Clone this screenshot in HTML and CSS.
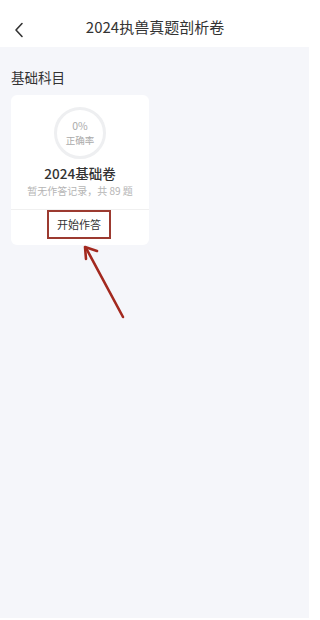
FILE: index.html
```html
<!DOCTYPE html>
<html lang="zh-CN">
<head>
  <meta charset="UTF-8" />
  <meta name="viewport" content="width=device-width, initial-scale=1.0" />
  <title>2024执兽真题剖析卷</title>
  <link rel="stylesheet" href="styles.css">
</head>
<body>
  <!-- Top bar -->
  <div class="topbar">
    <svg class="back" width="12" height="16" viewBox="0 0 12 16">
      <path d="M9 1.5 L3 8 L9 14.5" fill="none" stroke="#333" stroke-width="1.6" stroke-linecap="round" stroke-linejoin="round"/>
    </svg>
    <div class="title">2024执兽真题剖析卷</div>
  </div>

  <!-- Content -->
  <div class="main">
    <h2 class="section-title">基础科目</h2>
    <div class="grid">
      <div class="card">
        <div class="ring">
          <span class="rate">0%</span>
          <span class="rate-label">正确率</span>
        </div>
        <h3>2024基础卷</h3>
        <p class="meta">暂无作答记录，共 89 题</p>
        <div class="card-foot">
          <span class="start-btn">开始作答</span>
        </div>
      </div>
    </div>

    <!-- annotation arrow -->
    <svg class="arrow" width="60" height="90" viewBox="0 0 60 90">
      <path d="M51 78 L14 9" fill="none" stroke="#a3291f" stroke-width="2.6" stroke-linecap="round"/>
      <path d="M25 12 L13 8 L14 20" fill="none" stroke="#a3291f" stroke-width="2.6" stroke-linecap="round" stroke-linejoin="round"/>
    </svg>
  </div>
</body>
</html>
```

FILE: styles.css
```css
body {
  font-family: "Noto Sans CJK SC", "Noto Sans", sans-serif;
  background: #fff;
  margin: 0;
  padding: 0;
  color: #333;
}

.topbar {
  height: 47px;
  display: flex;
  align-items: center;
  justify-content: center;
  position: relative;
  padding-top: 5px;
  box-sizing: border-box;
}

.back {
  position: absolute;
  left: 13px;
  top: 22px;
}

.title {
  font-size: 15px;
  color: #333;
  margin-right: 10px;
}

.main {
  position: relative;
  width: 309px;
  height: 571px;
  background: #f5f6fa;
  padding: 20px 11px 0;
  box-sizing: border-box;
}

.section-title {
  font-size: 13.5px;
  font-weight: normal;
  margin: 0 0 8px;
  color: #333;
  line-height: 20px;
}

.grid {
  display: grid;
  grid-template-columns: 138px;
}

.card {
  background: #fff;
  border-radius: 6px;
  display: flex;
  flex-direction: column;
  align-items: center;
  padding-top: 12px;
}

.ring {
  width: 46px;
  height: 46px;
  border: 3px solid #eeeff1;
  border-radius: 50%;
  display: flex;
  flex-direction: column;
  align-items: center;
  justify-content: center;
  color: #aaa;
}

.rate {
  font-size: 10.5px;
  line-height: 12px;
}

.rate-label {
  font-size: 9.5px;
  line-height: 12px;
  margin-top: 2px;
}

.card h3 {
  margin: 5px 0 0;
  font-size: 13.5px;
  font-weight: 500;
  line-height: 18px;
  color: #333;
}

.meta {
  margin: 2px 0 0;
  font-size: 10px;
  color: #b5b5b5;
  line-height: 14px;
}

.card-foot {
  width: 100%;
  border-top: 1px solid #f0f0f0;
  margin-top: 11px;
  height: 35px;
  display: flex;
  justify-content: center;
  align-items: flex-start;
}

.start-btn {
  font-size: 11px;
  color: #333;
  border: 2px solid #9c3a30;
  width: 60px;
  height: 25px;
  line-height: 25px;
  text-align: center;
  margin-left: -2px;
}

.arrow {
  position: absolute;
  left: 72px;
  top: 192px;
}
```
